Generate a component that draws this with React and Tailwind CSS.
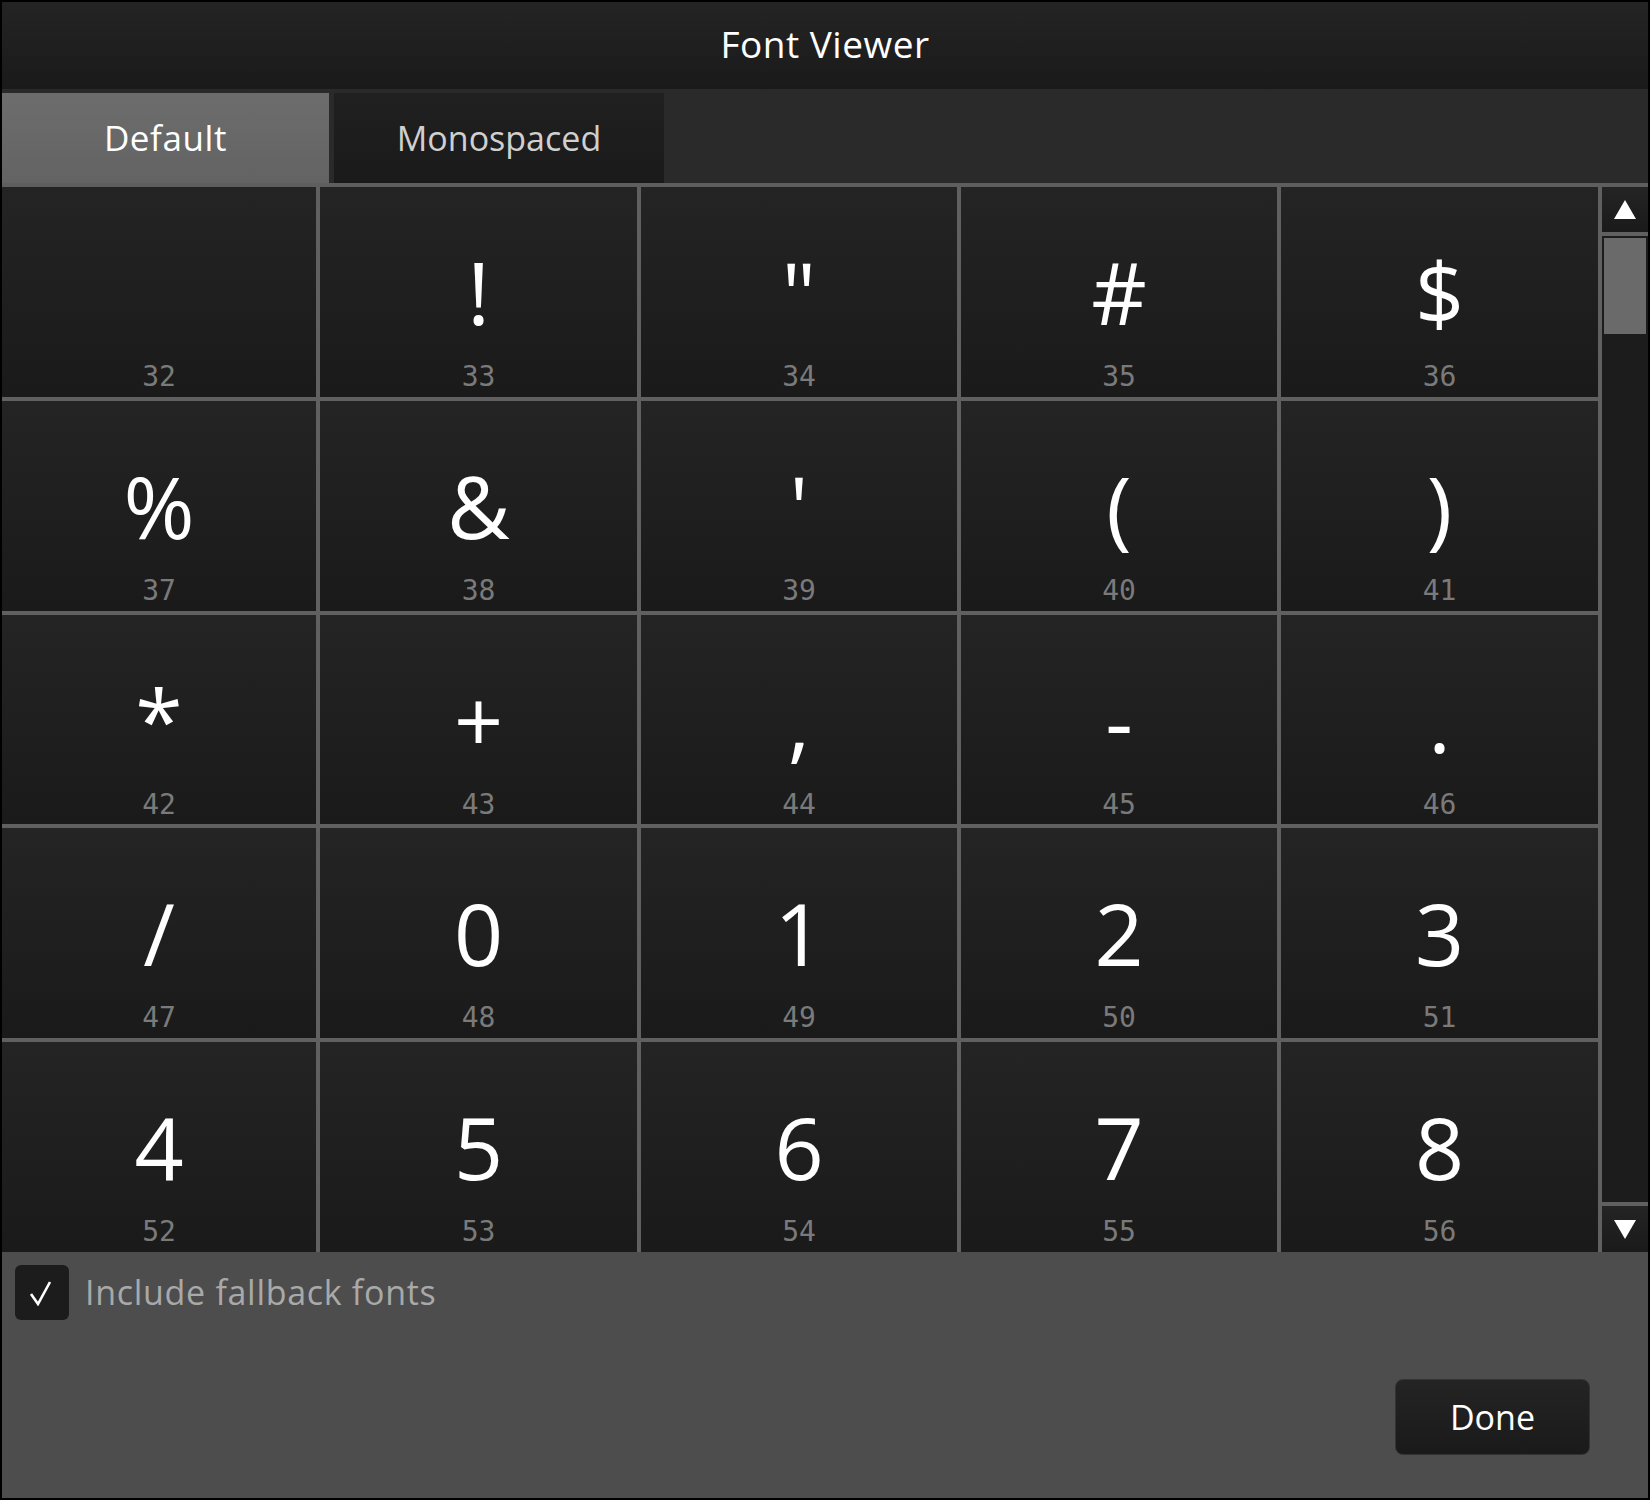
import React from "react";

const glyphs = Array.from({ length: 25 }, (_, i) => 32 + i);

const Cell = ({ code }) => (
  <div className="flex flex-col items-center bg-gradient-to-b from-[#242424] to-[#1a1a1a] pt-[62px]">
    <div className="h-[86px] text-[86px] leading-none text-white font-['Open_Sans',sans-serif]">
      {code === 32 ? "\u00a0" : String.fromCharCode(code)}
    </div>
    <div className="mt-[28px] text-[28px] leading-none text-[#7a7a7a] font-['DejaVu_Sans_Mono',monospace]">
      {code}
    </div>
  </div>
);

const Triangle = ({ down }) => (
  <svg width="22" height="19" viewBox="0 0 22 19">
    <polygon points={down ? "0,0 22,0 11,19" : "11,0 22,19 0,19"} fill="#ffffff" />
  </svg>
);

export default function App() {
  return (
    <div className="w-[1650px] h-[1500px] bg-black p-[2px] flex flex-col font-['Open_Sans',sans-serif]">
      {/* title */}
      <div className="h-[87px] shrink-0 flex items-center justify-center pb-[4px] bg-gradient-to-b from-[#242424] to-[#1a1a1a]">
        <span className="text-[37px] tracking-[0.5px] text-white">Font Viewer</span>
      </div>

      {/* tabs */}
      <div className="h-[94px] shrink-0 bg-[#2a2a2a] pt-[4px] flex gap-[5px]">
        <div className="w-[327px] flex items-center justify-center bg-gradient-to-b from-[#6d6d6d] to-[#636363] text-[35px] tracking-[0.6px] text-white">
          Default
        </div>
        <div className="w-[330px] flex items-center justify-center bg-gradient-to-b from-[#202020] to-[#1a1a1a] text-[34px] text-[#d0d0d0]">
          Monospaced
        </div>
      </div>
      <div className="h-[4px] shrink-0 bg-[#5e5e5e]" />

      {/* grid + scrollbar */}
      <div className="h-[1065px] shrink-0 flex gap-[4px] bg-[#606060]">
        <div className="w-[1596px] grid grid-cols-[314px_317px_316px_316px_317px] grid-rows-5 gap-[4px]">
          {glyphs.map((c) => (
            <Cell key={c} code={c} />
          ))}
        </div>
        <div className="w-[46px] flex flex-col gap-[4px]">
          <div className="h-[45px] flex items-center justify-center bg-gradient-to-b from-[#242424] to-[#1a1a1a]">
            <Triangle />
          </div>
          <div className="flex-1 bg-[#1c1c1c] p-[2px]">
            <div className="h-[96px] bg-[#6a6a6a]" />
          </div>
          <div className="h-[46px] flex items-center justify-center bg-gradient-to-b from-[#242424] to-[#1a1a1a]">
            <Triangle down />
          </div>
        </div>
      </div>

      {/* bottom panel */}
      <div className="flex-1 bg-[#4d4d4d] flex flex-col">
        <div className="flex items-center gap-[16px] mt-[13px] ml-[13px]">
          <div className="w-[54px] h-[55px] rounded-[6px] bg-[#1c1c1c] flex items-center justify-center">
            <svg width="26" height="26" viewBox="0 0 26 26">
              <polyline points="2,14 9,24 21,2" fill="none" stroke="#ffffff" strokeWidth="2.6" />
            </svg>
          </div>
          <span className="text-[34px] tracking-[0.7px] text-[#a9a9a9]">Include fallback fonts</span>
        </div>
        <div className="mt-auto flex justify-end pr-[58px] pb-[43px]">
          <button className="w-[195px] h-[76px] rounded-[8px] border border-[#333333] bg-gradient-to-b from-[#242424] to-[#1a1a1a] text-[34px] text-white">
            Done
          </button>
        </div>
      </div>
    </div>
  );
}
